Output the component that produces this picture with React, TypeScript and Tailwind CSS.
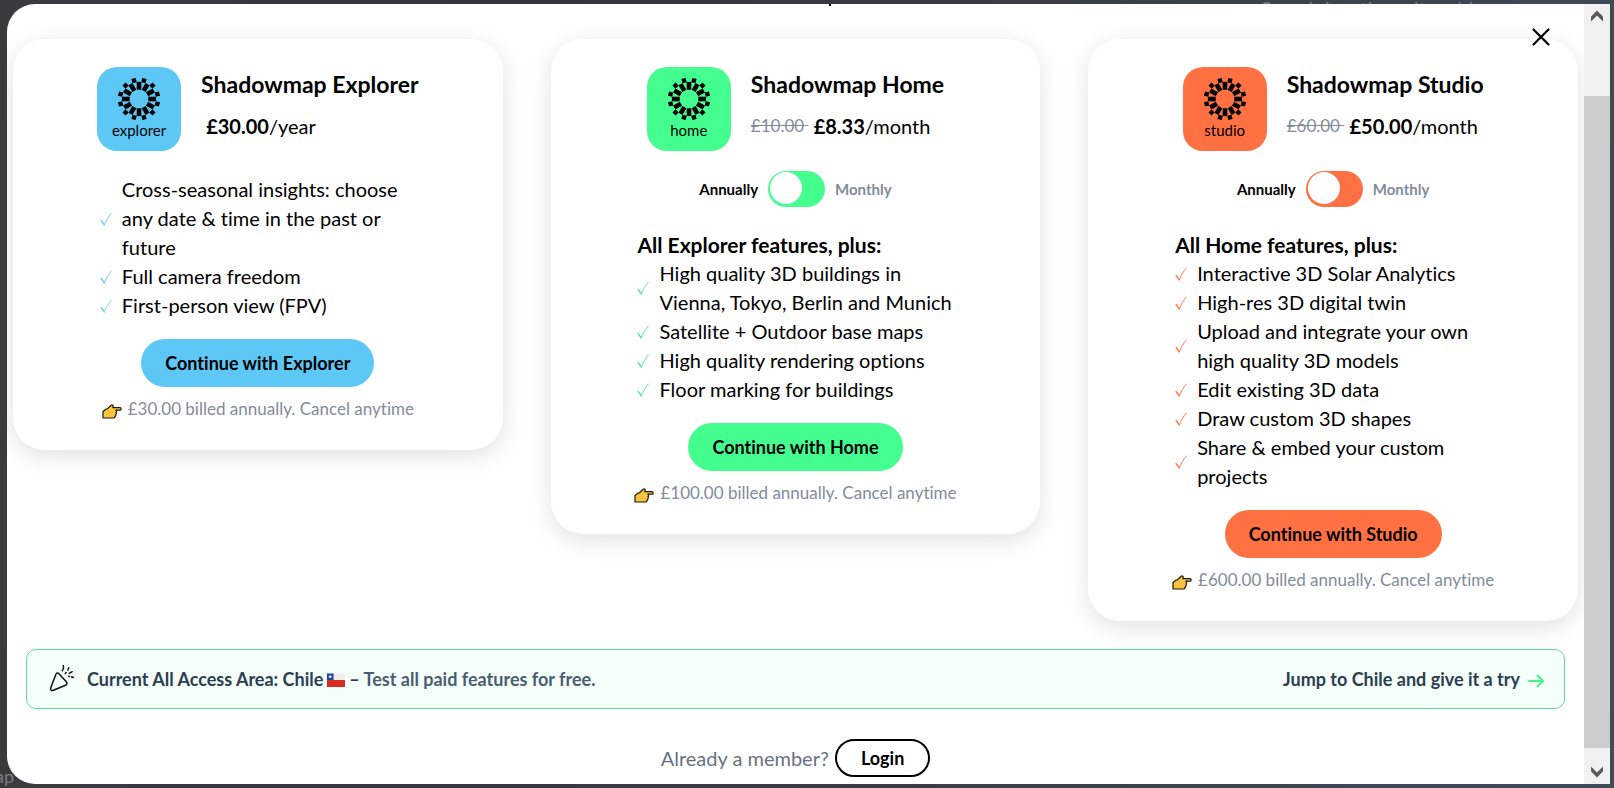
import { useState } from "react";

type Plan = {
  id: string;
  title: string;
  oldPrice?: string;
  price: string;
  period: string;
  heading?: string;
  features: string[];
  note: string;
  fill: string;
  stroke: string;
};

const PLANS: Plan[] = [
  {
    id: "explorer",
    title: "Explorer",
    price: "£30.00",
    period: "/year",
    features: [
      "Cross-seasonal insights: choose any date & time in the past or future",
      "Full camera freedom",
      "First-person view (FPV)",
    ],
    note: "£30.00 billed annually. Cancel anytime",
    fill: "bg-[#5dc8f6]",
    stroke: "text-[#5dc8f6]",
  },
  {
    id: "home",
    title: "Home",
    oldPrice: "£10.00",
    price: "£8.33",
    period: "/month",
    heading: "All Explorer features, plus:",
    features: [
      "High quality 3D buildings in Vienna, Tokyo, Berlin and Munich",
      "Satellite + Outdoor base maps",
      "High quality rendering options",
      "Floor marking for buildings",
    ],
    note: "£100.00 billed annually. Cancel anytime",
    fill: "bg-[#44ff8f]",
    stroke: "text-[#44e887]",
  },
  {
    id: "studio",
    title: "Studio",
    oldPrice: "£60.00",
    price: "£50.00",
    period: "/month",
    heading: "All Home features, plus:",
    features: [
      "Interactive 3D Solar Analytics",
      "High-res 3D digital twin",
      "Upload and integrate your own high quality 3D models",
      "Edit existing 3D data",
      "Draw custom 3D shapes",
      "Share & embed your custom projects",
    ],
    note: "£600.00 billed annually. Cancel anytime",
    fill: "bg-[#ff7142]",
    stroke: "text-[#ff7142]",
  },
];

const SPOKES = Array.from({ length: 12 }, (_, i) => i * 30);

function SunLogo() {
  return (
    <svg viewBox="-22 -22 44 44" className="size-11" aria-hidden="true">
      {SPOKES.map((a) => (
        <g key={a} transform={`rotate(${a})`}>
          <rect x="9.3" y="-2.3" width="7.8" height="4.6" />
          <rect x="16.8" y="-2.2" width="4.4" height="4.4" transform="rotate(15)" />
        </g>
      ))}
    </svg>
  );
}

function Check() {
  return (
    <svg viewBox="0 0 12 14" className="h-[14px] w-3 shrink-0" fill="none" stroke="currentColor" aria-hidden="true">
      <path d="M1.2 8.6 4.3 12.8" strokeWidth="1.4" strokeLinecap="round" />
      <path d="M4.3 12.8C6 8.8 8.4 4.3 11.300 1" strokeWidth="0.9" strokeLinecap="round" />
    </svg>
  );
}

function Hand() {
  return (
    <svg viewBox="0 0 20 15" className="mt-1 h-[15px] w-5 shrink-0" aria-hidden="true">
      <path
        d="M1 7.500 3.800 5.200 5.400 4.800 9.200 1.300c.9-.7 2.300-.1 2 1L10.800 3.600H18c1.500 0 1.500 2.600 0 2.600h-4.200c1 .5 1 1.700.2 2.200.7.600.6 1.700-.3 2.100.4.900 0 1.700-.8 1.900.1 1-.5 1.600-1.500 1.600H1Z"
        fill="#fcc33c"
        stroke="#1c1a14"
        strokeWidth="1.2"
        strokeLinejoin="round"
      />
    </svg>
  );
}

function Party() {
  return (
    <svg
      viewBox="0 0 26 30"
      className="h-[30px] w-[26px] shrink-0"
      fill="none"
      stroke="#111"
      strokeWidth="1.5"
      strokeLinecap="round"
      strokeLinejoin="round"
      aria-hidden="true"
    >
      <path d="M6.900 10.300C7.500 8.800 9 8.500 10.200 9.900L17.300 17.700C18.500 19 18.100 20.400 16.600 21.300L4.400 26.300C2.400 27 1.300 26 1.700 24Z" />
      <path d="M14.300 1.600c.7 1.800.2 3.400-.9 5M19.800 3.700l-.9 2.300M17.200 8.500l-.9 1.100M20.300 9.300l2.900-1.600M19.600 12.200h.700M22.500 12.700l1.900.8" />
    </svg>
  );
}

function Flag() {
  return (
    <svg viewBox="0 0 18 14" className="mx-1 inline-block h-[14px] w-[18px] align-[-1px]" role="img" aria-label="Flag of Chile">
      <rect width="18" height="7" y="0.5" fill="#eeeeee" />
      <rect width="18" height="7" y="7" fill="#d92b21" />
      <rect width="6.5" height="6.5" y="0.5" fill="#1b3fa6" />
      <path d="m3.200 1.600.6 1.500h1.500L4.100 4l.5 1.500-1.400-.9-1.400.9.500-1.500L1.100 3.100h1.500z" fill="#fff" />
    </svg>
  );
}

function Chevron({ down = false }: { down?: boolean }) {
  return (
    <svg viewBox="0 0 14 12" className="h-3 w-[14px]" aria-hidden="true">
      <path
        d={down ? "M1 .6v4.600L7 11.400l6-6.200V.6L7 6.600Z" : "M1 11.400V6.800L7 .6l6 6.200v4.600L7 5.400Z"}
        fill="#585858"
      />
    </svg>
  );
}

function PlanCard({ plan }: { plan: Plan }) {
  const [monthly, setMonthly] = useState(false);
  const dim = "text-[#828c99]";
  return (
    <section className="flex min-w-0 flex-col items-center rounded-[32px] bg-white px-6 pt-7 pb-7 shadow-[0_6px_24px_rgba(0,0,0,0.12)]">
      <header className="flex items-start gap-5">
        <div className={`flex size-[84px] flex-col items-center rounded-[20px] pt-[10px] ${plan.fill}`}>
          <SunLogo />
          <span className="text-[15px] leading-[18px]">{plan.id}</span>
        </div>
        <div>
          <h2 className="text-[23px] leading-[34px] font-bold">Shadowmap {plan.title}</h2>
          <p className="mt-2 flex text-xl leading-[34px] whitespace-pre">
            {plan.oldPrice && <s className="text-[17px] leading-[34px] text-[#828c99]">{plan.oldPrice} </s>}
            <span>
              {" "}
              <b>{plan.price}</b>
              {plan.period}
            </span>
          </p>
        </div>
      </header>

      {plan.heading && (
        <div className="mt-5 flex items-center gap-[10px] text-[15px] font-bold">
          <span className={monthly ? dim : ""}>Annually</span>
          <input
            id={`${plan.id}-billing`}
            type="checkbox"
            role="switch"
            checked={monthly}
            onChange={(e) => setMonthly(e.target.checked)}
            className={`relative h-9 w-[57px] cursor-pointer appearance-none rounded-full before:absolute before:top-px before:left-[2px] before:size-8 before:rounded-full before:bg-white before:transition-transform checked:before:translate-x-[21px] ${plan.fill}`}
          />
          <label htmlFor={`${plan.id}-billing`} className={monthly ? "" : dim}>
            Monthly
          </label>
        </div>
      )}

      <div className="mt-6 w-full max-w-[316px]">
        {plan.heading && <h3 className="text-[21px] leading-7 font-bold">{plan.heading}</h3>}
        <ul>
          {plan.features.map((f) => (
            <li key={f} className={`flex items-center gap-[10px] ${plan.stroke}`}>
              <Check />
              <span className="text-xl leading-[29px] text-black">{f}</span>
            </li>
          ))}
        </ul>
      </div>

      <button type="button" className={`mt-[19px] h-12 cursor-pointer rounded-full px-6 text-lg font-bold ${plan.fill}`}>
        Continue with {plan.title}
      </button>
      <p className="mt-[9px] flex items-center gap-[6px] text-[17px] leading-[26px] whitespace-nowrap text-[#828c99]">
        <Hand />
        {plan.note}
      </p>
    </section>
  );
}

export default function App() {
  return (
    <div className="relative h-screen overflow-hidden bg-[linear-gradient(100deg,#3b3b3f_0%,#34363b_30%,#3a3d44_60%,#3f4c58_100%)] py-1 pr-1 pl-[7px] font-['Lato','Liberation_Sans',sans-serif] text-black [font-variant-ligatures:no-common-ligatures]">
      <span className="absolute -top-[4px] right-[106px] text-xl leading-6 text-[#6f7a84]">Search location, city address</span>
      <span className="absolute bottom-0 -left-[5px] text-lg leading-6 text-[#7a7e84]">ap</span>

      <main className="relative flex h-full overflow-hidden rounded-l-[28px] bg-white">
        <div className="relative min-w-0 flex-1 overflow-hidden">
          <div className="absolute top-0 left-[822px] h-[2px] w-[2px] bg-black" />
          <button type="button" aria-label="Close" className="absolute top-[23px] right-[33px] z-10 cursor-pointer p-px">
            <svg viewBox="0 0 18 18" className="size-[18px]" stroke="#000" strokeWidth="2.2" strokeLinecap="round" aria-hidden="true">
              <path d="M1.500 1.500l15 15M16.500 1.500l-15 15" />
            </svg>
          </button>

          <div className="grid grid-cols-3 items-start gap-12 px-[6px] pt-[35px]">
            {PLANS.map((p) => (
              <PlanCard key={p.id} plan={p} />
            ))}
          </div>

          <div className="mx-[19px] mt-7 flex h-[60px] items-center justify-between rounded-[10px] border border-[#5fdc9a] bg-[#f4fffa] pr-5 pl-[22px] text-lg font-bold text-[#2c3e50]">
            <p className="flex items-center">
              <Party />
              <span className="ml-3">
                Current All Access Area: Chile
                <Flag />– <span className="text-[#4b5d70]">Test all paid features for free.</span>
              </span>
            </p>
            <a href="#chile" className="flex items-center gap-2">
              Jump to Chile and give it a try
              <svg viewBox="0 0 16 14" className="mt-1 h-[14px] w-4" fill="none" stroke="#44f58c" strokeWidth="2" strokeLinecap="round" strokeLinejoin="round" aria-hidden="true">
                <path d="M1 7h14M9.500 1.500 15 7l-5.500 5.500" />
              </svg>
            </a>
          </div>

          <div className="mt-[30px] flex items-center justify-center gap-[6px] text-xl text-[#66727f]">
            <span>Already a member?</span>
            <button type="button" className="h-[38px] cursor-pointer rounded-full border-2 border-black px-6 text-lg leading-5 font-bold text-black">
              Login
            </button>
          </div>
        </div>

        <div className="flex w-[26px] shrink-0 flex-col bg-[#f0f0f0]">
          <button type="button" aria-label="Scroll up" className="flex h-[92px] justify-center pt-[6px]">
            <Chevron />
          </button>
          <div className="flex-1 bg-[#cdcdcd]" />
          <button type="button" aria-label="Scroll down" className="flex h-9 justify-center pt-[18px]">
            <Chevron down />
          </button>
        </div>
      </main>
    </div>
  );
}
